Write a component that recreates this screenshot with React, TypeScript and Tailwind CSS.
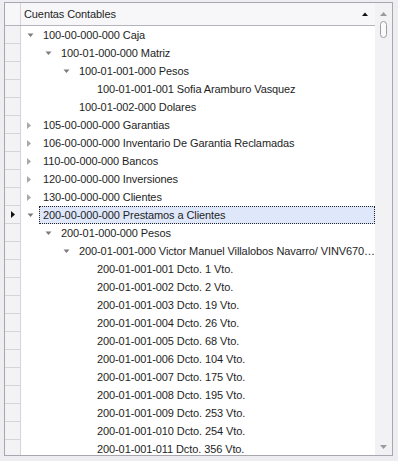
import React from "react";

type Node = { level: number; exp: "open" | "closed" | null; text: string; focused?: boolean };

const rows: Node[] = [
  { level: 0, exp: "open", text: "100-00-000-000 Caja" },
  { level: 1, exp: "open", text: "100-01-000-000 Matriz" },
  { level: 2, exp: "open", text: "100-01-001-000 Pesos" },
  { level: 3, exp: null, text: "100-01-001-001 Sofia Aramburo Vasquez" },
  { level: 2, exp: null, text: "100-01-002-000 Dolares" },
  { level: 0, exp: "closed", text: "105-00-000-000 Garantias" },
  { level: 0, exp: "closed", text: "106-00-000-000 Inventario De Garantia Reclamadas" },
  { level: 0, exp: "closed", text: "110-00-000-000 Bancos" },
  { level: 0, exp: "closed", text: "120-00-000-000 Inversiones" },
  { level: 0, exp: "closed", text: "130-00-000-000 Clientes" },
  { level: 0, exp: "open", text: "200-00-000-000 Prestamos a Clientes", focused: true },
  { level: 1, exp: "open", text: "200-01-000-000 Pesos" },
  { level: 2, exp: "open", text: "200-01-001-000 Victor Manuel Villalobos Navarro/ VINV670\u2026" },
  { level: 3, exp: null, text: "200-01-001-001 Dcto. 1 Vto." },
  { level: 3, exp: null, text: "200-01-001-002 Dcto. 2 Vto." },
  { level: 3, exp: null, text: "200-01-001-003 Dcto. 19 Vto." },
  { level: 3, exp: null, text: "200-01-001-004 Dcto. 26 Vto." },
  { level: 3, exp: null, text: "200-01-001-005 Dcto. 68 Vto." },
  { level: 3, exp: null, text: "200-01-001-006 Dcto. 104 Vto." },
  { level: 3, exp: null, text: "200-01-001-007 Dcto. 175 Vto." },
  { level: 3, exp: null, text: "200-01-001-008 Dcto. 195 Vto." },
  { level: 3, exp: null, text: "200-01-001-009 Dcto. 253 Vto." },
  { level: 3, exp: null, text: "200-01-001-010 Dcto. 254 Vto." },
  { level: 3, exp: null, text: "200-01-001-011 Dcto. 356 Vto." },
];

const indent = ["pl-[0px]", "pl-[18px]", "pl-[36px]", "pl-[54px]"];

function Expander({ exp }: { exp: Node["exp"] }) {
  return (
    <span className="w-[18px] h-full flex items-center justify-center shrink-0">
      {exp === "open" && (
        <svg width="7" height="5" viewBox="0 0 7 5" className="mt-[1px]">
          <polygon points="0.5,0.5 6.5,0.5 3.5,4" fill="#7c7c7c" />
        </svg>
      )}
      {exp === "closed" && (
        <svg width="4" height="7" viewBox="0 0 4 7" className="-ml-[2px]">
          <polygon points="0,0 4,3.5 0,7" fill="#a8a8a8" />
        </svg>
      )}
    </span>
  );
}

function Row({ node }: { node: Node }) {
  return (
    <div className="flex h-[18px] shrink-0">
      <div className="w-[16px] shrink-0 bg-[#f3f3f6] border-r border-b border-[#d4d4da] flex items-center justify-center">
        {node.focused && (
          <svg width="4" height="7" viewBox="0 0 4 7">
            <polygon points="0,0 4,3.5 0,7" fill="#111" />
          </svg>
        )}
      </div>
      <div className={`flex-1 min-w-0 flex items-center ${indent[node.level]}`}>
        <Expander exp={node.exp} />
        <div
          className={
            node.focused
              ? "flex-1 min-w-0 h-full flex items-center px-[3px] bg-[#dfe8fb] border border-dotted border-[#222]"
              : "flex-1 min-w-0 h-full flex items-center px-[4px] overflow-hidden"
          }
        >
          <span className="whitespace-nowrap">{node.text}</span>
        </div>
      </div>
    </div>
  );
}

export default function App() {
  return (
    <div
      className="w-[398px] h-[461px] bg-[#eeeef2] pl-[4px] pt-[2px] text-[11px] tracking-[-0.1px] text-[#1e1e1e]"
      style={{ fontFamily: '"Liberation Sans", Arial, sans-serif' }}
    >
      <div className="w-[389px] h-[454px] border border-[#a7a7b0] bg-white flex overflow-hidden">
        {/* grid */}
        <div className="flex-1 min-w-0 flex flex-col overflow-hidden">
          <div className="flex h-[23px] shrink-0 bg-[#f7f7f9] border-b border-[#b4b4bc]">
            <div className="w-[16px] shrink-0 border-r border-[#d4d4da]" />
            <div className="flex-1 flex items-center pl-[3px] pr-[7px]">
              <span className="flex-1">Cuentas Contables</span>
              <svg width="6" height="4" viewBox="0 0 6 4" className="-mt-[1px]">
                <polygon points="0,4 3,0.5 6,4" fill="#111" />
              </svg>
            </div>
          </div>
          {rows.map((r, i) => (
            <Row key={i} node={r} />
          ))}
        </div>
        {/* scrollbar */}
        <div className="w-[17px] shrink-0 bg-[#f2f2f5] flex flex-col items-center">
          <svg width="7" height="4" viewBox="0 0 7 4" className="mt-[9px]">
            <polygon points="0,4 3.5,0 7,4" fill="#9a9aa0" />
          </svg>
          <div className="mt-[5px] w-[7px] h-[17px] rounded-full border border-[#9c9ca2] bg-[#fafafa]" />
          <div className="flex-1" />
          <svg width="7" height="4" viewBox="0 0 7 4" className="mb-[6px]">
            <polygon points="0,0 3.5,4 7,0" fill="#9a9aa0" />
          </svg>
        </div>
      </div>
    </div>
  );
}
